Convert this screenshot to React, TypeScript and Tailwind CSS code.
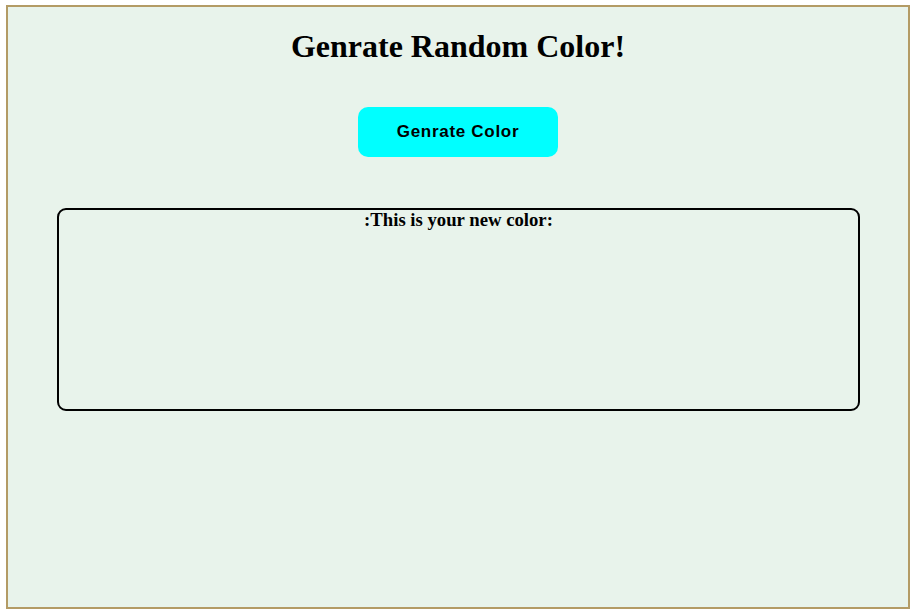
export default function App() {
  return (
    <div className="pt-[5px] pl-[6px]">
      <div className="w-[904px] h-[604px] border-2 border-[#b39b65] bg-[#e8f3eb] flex flex-col items-center">
        <h1 className="mt-[21px] text-[32px] leading-[37px] font-bold text-black font-['Liberation_Serif',serif]">
          Genrate Random Color!
        </h1>
        <button className="mt-[42px] w-[200px] h-[50px] rounded-[10px] bg-[#00ffff] text-black text-[17px] tracking-[0.7px] font-bold font-['Liberation_Sans',Arial,sans-serif]">
          Genrate Color
        </button>
        <div className="mt-[51px] self-start ml-[49px] w-[803px] h-[203px] border-2 border-black rounded-[9px]">
          <h3 className="text-center text-[18.72px] leading-[20px] font-bold text-black font-['Liberation_Serif',serif]">
            :This is your new color:
          </h3>
        </div>
      </div>
    </div>
  );
}
